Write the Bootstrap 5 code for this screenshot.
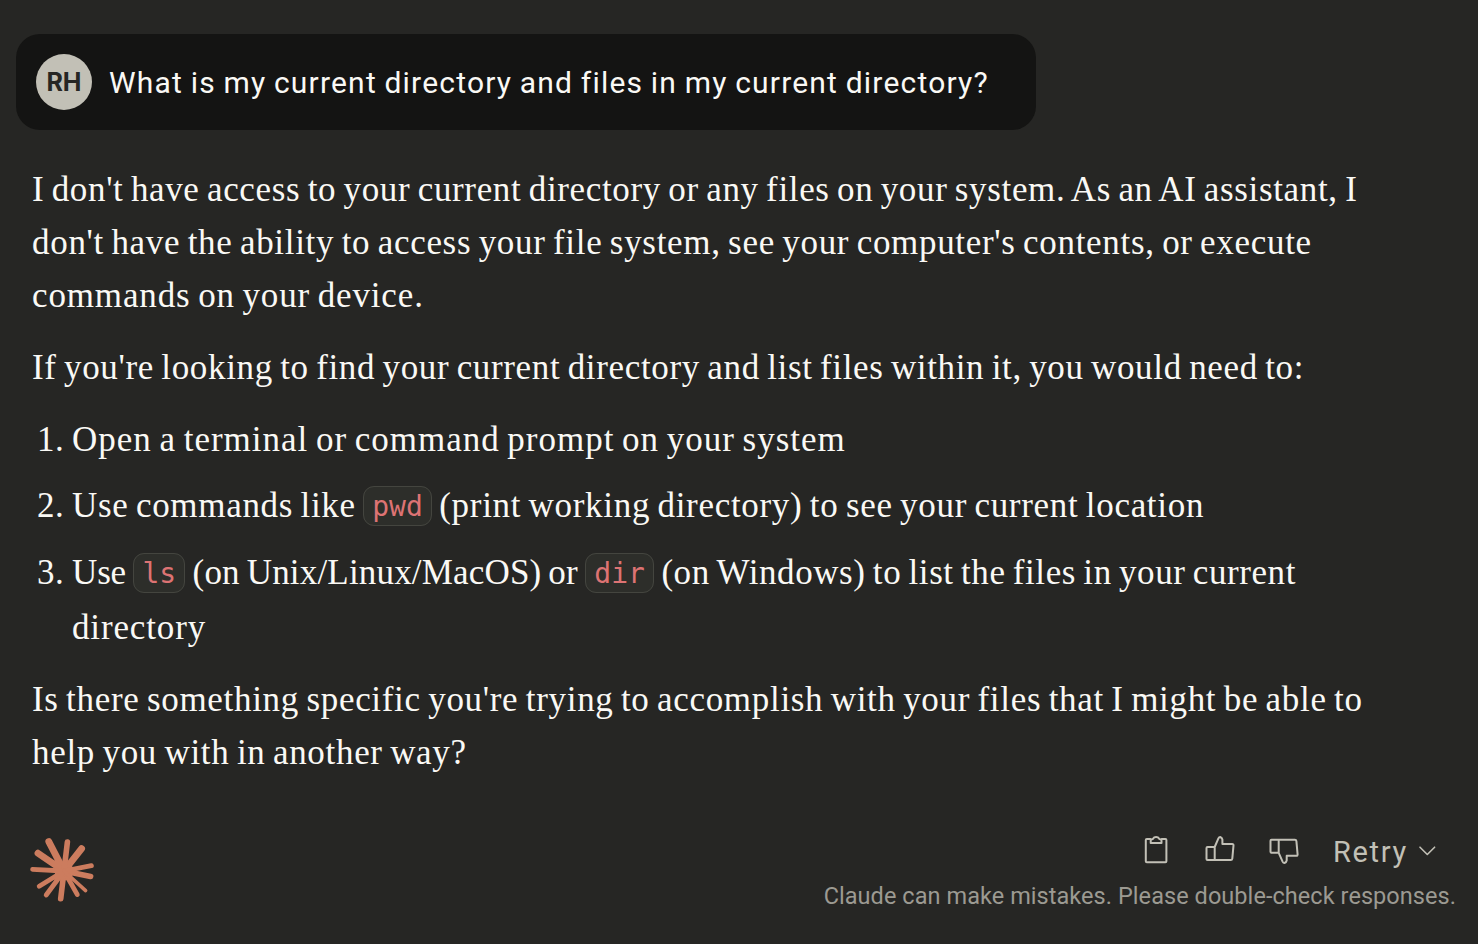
<!DOCTYPE html>
<html lang="en">
<head>
<meta charset="utf-8">
<meta name="viewport" content="width=device-width, initial-scale=1">
<title>Conversation</title>
<link rel="stylesheet" href="https://cdn.jsdelivr.net/npm/bootstrap@5.3.0/dist/css/bootstrap.min.css">
<style>
  body { background: #262624; color: #faf9f5; font-family: Roboto, "Liberation Sans", sans-serif; height: 944px; overflow: hidden; }
  .prompt { margin: 34px 0 0 16px; width: 1020px; height: 96px; border-radius: 24px; background: #141413; padding: 0 20px; font-size: 30px; letter-spacing: 1.19px; word-spacing: -1px; }
  .avatar { width: 56px; height: 56px; margin-right: 17px; background: #c2c0b6; color: #262624; font: 700 25px Inter, sans-serif; letter-spacing: 0; }
  .reply { margin: 33px 0 0 32px; font: 35px/53px "Liberation Serif", serif; white-space: nowrap; word-spacing: -2px; letter-spacing: .69px; }
  .reply p { margin-bottom: 19px; }
  .reply p:last-child { margin-bottom: 0; }
  .reply ol { padding-left: 40px; margin-bottom: 18px; }
  .reply li + li { margin-top: 12px; line-height: 55px; }
  .reply code { font: 28px/1 "DejaVu Sans Mono", monospace; letter-spacing: 0; color: #dd7373; background: #2d2e2a; border: 1px solid #44453f; border-radius: 11px; padding: 3px 8px 2px; vertical-align: 1px; }
  .ls-0 { letter-spacing: -.15px; }
  .ls-1 { letter-spacing: .18px; }
  .ls-2 { letter-spacing: .65px; }
  .ls-3 { letter-spacing: .86px; }
  .ls-4 { letter-spacing: .98px; }
  .ls-5 { letter-spacing: .58px; }
  .foot { margin-top: 46px; padding: 0 22px 0 20px; }
  .tools { height: 50px; color: #c2c0b6; padding: 5px 18px 0 0; }
  .tools svg, .burst { display: block; flex: none; }
  .tools svg { fill: none; stroke: currentColor; stroke-width: 2; stroke-linejoin: round; stroke-linecap: round; }
  .retry { font-size: 29px; line-height: 44px; letter-spacing: 1.7px; margin-left: 31px; }
  .note { font-size: 23.5px; line-height: 42px; letter-spacing: .06px; color: #9c9a92; white-space: nowrap; }
</style>
</head>
<body>
<div class="prompt d-flex align-items-center">
  <div class="avatar rounded-circle d-flex align-items-center justify-content-center flex-shrink-0">RH</div>
  <span class="text-nowrap">What is my current directory and files in my current directory?</span>
</div>
<main class="reply">
  <p><span class="ls-2">I don't have access to your current directory or any files on your system. As an AI assistant, I</span><br>don't have the ability to access your file system, see your computer's contents, or execute<br><span class="ls-3">commands on your device.</span></p>
  <p class="ls-2">If you're looking to find your current directory and list files within it, you would need to:</p>
  <ol>
    <li><span class="ls-4">Open a terminal or command prompt on your system</span></li>
    <li>Use commands like <code>pwd</code> (print working directory) to see your current location</li>
    <li><span class="ls-0">Use</span> <code>ls</code> <span class="ls-1">(on Unix/Linux/MacOS) or</span> <code>dir</code> <span class="ls-5">(on Windows) to list the files in your current</span><br><span class="ls-3">directory</span></li>
  </ol>
  <p>Is there something specific you're trying to accomplish with your files that I might be able to<br>help you with in another way?</p>
</main>
<footer class="foot d-flex justify-content-between">
  <svg class="burst" width="90" height="90" viewBox="0 0 90 90" stroke="#cc7c5e" stroke-linecap="round" fill="#cc7c5e">
    <circle cx="44" cy="46" r="9.5" stroke="none"/>
    <path stroke-width="6.8" d="M44 46 28.8 16.6M44 46 61.6 23.6M44 46 18 28.2"/>
    <path stroke-width="5.6" d="M44 46 47.4 17M44 46 70.6 51.4M44 46 40.7 73.8"/>
    <path stroke-width="4.8" d="M44 46 71.4 40.6M44 46 57.3 69.6M44 46 26.2 70M44 46 19.2 61.2M44 46 12.6 44.4"/>
    <path stroke-width="3.6" d="M44 46 65.6 65.6"/>
  </svg>
  <div class="d-flex flex-column align-items-end">
    <div class="tools d-flex">
      <svg width="34" height="40" viewBox="0 0 34 40"><path d="M10.5 9H6.8a1 1 0 0 0-1 1v21.3a1 1 0 0 0 1 1h18.6a1 1 0 0 0 1-1V10a1 1 0 0 0-1-1h-3.7M10.7 13V10.6q0-1.3 1.4-1.3.6 0 .9-.6Q14 7 16.1 7t3.1 1.7q.3.6.9.6 1.4 0 1.4 1.3V13z"/></svg>
      <svg class="ms-4" width="40" height="40" viewBox="-2 0 40 40"><path d="M14.7 17H7.5a1 1 0 0 0-1 1v11a1 1 0 0 0 1 1h7.2zM14.7 17 18.4 8.4Q19 7 20.2 7 22 7.6 22.4 9.5V14h9.8q1.4 0 1.3 1.4l-1.2 13.2q-.2 1.4-1.5 1.4H14.7"/></svg>
      <svg class="ms-4" width="40" height="40" viewBox="-2 0 40 40"><path d="M14.7 22.8H7.5a1 1 0 0 1-1-1v-11a1 1 0 0 1 1-1h7.2zM14.7 22.8 18.6 31.6Q19.3 33 20.5 33 22.3 32.4 22.7 30.5V25.8h9.6q1.4 0 1.3-1.4l-1.2-13.2q-.2-1.4-1.5-1.4H14.7"/></svg>
      <span class="retry">Retry</span>
      <svg class="ms-2" width="22" height="40" viewBox="0 0 22 40"><path stroke-width="1.6" d="M4 17.2 11.3 24.5 18.6 17.2"/></svg>
    </div>
    <div class="note">Claude can make mistakes. Please double-check responses.</div>
  </div>
</footer>
<script src="https://cdn.jsdelivr.net/npm/bootstrap@5.3.0/dist/js/bootstrap.bundle.min.js"></script>
</body>
</html>
